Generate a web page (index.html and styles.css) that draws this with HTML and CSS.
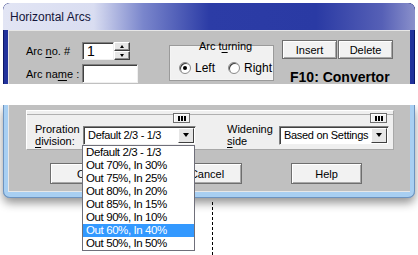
FILE: index.html
```html
<!DOCTYPE html>
<html lang="en">
<head>
  <meta charset="UTF-8" />
  <title>Horizontal Arcs</title>
  <link rel="stylesheet" href="styles.css">
</head>
<body>

  <div class="shot shot-top">
    <div class="win win-top">
      <div class="titlebar">Horizontal Arcs</div>
      <div class="client client-top">
        <div class="fields">
          <span class="lbl">Arc <u>n</u>o. #</span>
          <div class="spin">
            <div class="edit edit-no">1</div>
            <div class="spin-btns">
              <div class="spin-btn"><span class="tri tri-up"></span></div>
              <div class="spin-btn"><span class="tri tri-down"></span></div>
            </div>
          </div>
          <span class="lbl">Arc na<u>m</u>e :</span>
          <div class="edit edit-name"></div>
        </div>

        <fieldset class="group">
          <legend>Arc t<u>u</u>rning</legend>
          <span class="radio"><span class="dot on"></span>Left</span>
          <span class="radio"><span class="dot"></span>Right</span>
        </fieldset>

        <div class="actions">
          <div class="btn-pair">
            <button class="btn btn-sm">Insert</button>
            <button class="btn btn-sm">Delete</button>
          </div>
          <div class="f10">F10: Convertor</div>
        </div>
      </div>
    </div>
  </div>

  <div class="shot shot-bottom">
    <div class="win win-bottom">
      <div class="client client-bottom">
        <div class="panel">
          <button class="grip grip-left"><i></i><i></i><i></i></button>
          <button class="grip grip-right"><i></i><i></i><i></i></button>
          <span class="lbl lbl-two lbl-pro">Proration<br><u>d</u>ivision:</span>
          <div class="combo combo-pro">
            <span class="combo-text">Default 2/3 - 1/3</span>
            <span class="drop"><span class="tri tri-drop"></span></span>
          </div>
          <span class="lbl lbl-two lbl-wid">Widening<br><u>s</u>ide</span>
          <div class="combo combo-wid">
            <span class="combo-text">Based on Settings</span>
            <span class="drop"><span class="tri tri-drop"></span></span>
          </div>
        </div>

        <div class="btn-row">
          <button class="btn btn-lg btn-ok">OK</button>
          <button class="btn btn-lg btn-cancel">Cancel</button>
          <button class="btn btn-lg btn-help">Help</button>
        </div>
      </div>
    </div>
    <div class="dash"></div>

    <ul class="droplist">
      <li>Default 2/3 - 1/3</li>
      <li>Out 70%, In 30%</li>
      <li>Out 75%, In 25%</li>
      <li>Out 80%, In 20%</li>
      <li>Out 85%, In 15%</li>
      <li>Out 90%, In 10%</li>
      <li class="sel">Out 60%, In 40%</li>
      <li>Out 50%, In 50%</li>
    </ul>
  </div>

</body>
</html>
```

FILE: styles.css
```css
    * {
      box-sizing: border-box;
    }

    body {
      margin: 0;
      background: #fff;
      font-family: "Liberation Sans", Arial, sans-serif;
      font-size: 11px;
      color: #000;
    }

    u {
      text-decoration-thickness: 1px;
      text-underline-offset: 2px;
    }

    .shot {
      overflow: hidden;
      position: relative;
    }

    .shot-top {
      height: 84px;
      padding: 3px 0 0 3px;
    }

    .shot-bottom {
      height: 150px;
      margin-top: 21px;
      padding-left: 3px;
    }

    /* window frame, top screenshot (dark blue) */
    .win {
      width: 412px;
    }

    .win-top {
      height: 120px;
      background: #22329b;
      border-radius: 7px 7px 0 0;
      padding: 0 5px;
      box-shadow: inset 1px 0 #0d1866, inset -1px 0 #0d1866, inset 0 1px #0d1866;
    }

    .titlebar {
      height: 27px;
      margin: 0 -5px;
      padding: 7px 0 0 7px;
      border-radius: 7px 7px 0 0;
      background: linear-gradient(90deg, #e2e5f4 0, #d9ddf1 22%, #7a86cc 34%, #2c3ca6 50%, #2a3aa4 76%, #5660b6 92%, #8a90cb 100%);
      font-size: 12px;
      color: #14163a;
    }

    .client {
      background: #c0c0c0;
    }

    .client-top {
      display: flex;
      align-items: flex-start;
      height: 93px;
      padding: 11px 0 0 17px;
      border-top: 1px solid #e6e6e6;
      border-left: 1px solid #e6e6e6;
    }

    .fields {
      display: grid;
      grid-template-columns: 56px auto;
      grid-template-rows: 18px 19px;
      row-gap: 4px;
      align-items: center;
    }

    .lbl {
      white-space: nowrap;
    }

    .edit {
      background: #fff;
      border: 1px solid;
      border-color: #808080 #f0f0f0 #f0f0f0 #808080;
      box-shadow: inset 1px 1px #404040;
      height: 100%;
    }

    .spin {
      display: flex;
      height: 18px;
    }

    .edit-no {
      width: 32px;
      padding: 1px 0 0 4px;
      font-size: 14px;
      line-height: 15px;
    }

    .spin-btns {
      display: flex;
      flex-direction: column;
      width: 16px;
    }

    .spin-btn {
      flex: 1;
      display: flex;
      align-items: center;
      justify-content: center;
      background: #e6e6e6;
      border: 1px solid;
      border-color: #fff #404040 #404040 #fff;
      box-shadow: inset -1px -1px #909090;
    }

    .tri {
      width: 0;
      height: 0;
      border-style: solid;
      border-color: transparent;
    }

    .tri-up {
      border-width: 0 2.5px 3px;
      border-bottom-color: #000;
    }

    .tri-down {
      border-width: 3px 2.5px 0;
      border-top-color: #000;
    }

    .edit-name {
      width: 56px;
      height: 19px;
    }

    /* Arc turning */
    .group {
      margin: -3px 0 0 32px;
      width: 103px;
      height: 41px;
      padding: 4px 0 0 8px;
      border: 1px solid #f4f4f4;
      box-shadow: 0 0 0 1px #9a9a9a;
      background: #f1f1f1;
      display: flex;
      gap: 13px;
    }

    .group legend {
      margin: 0 auto;
      padding: 0 3px;
      line-height: 14px;
    }

    .radio {
      display: flex;
      align-items: center;
      gap: 4px;
      font-size: 12px;
    }

    .dot {
      width: 12px;
      height: 12px;
      border-radius: 50%;
      background: #fff;
      border: 1px solid #8a8a8a;
      box-shadow: inset 1px 1px #404040;
      display: flex;
      align-items: center;
      justify-content: center;
    }

    .dot.on::after {
      content: "";
      width: 4px;
      height: 4px;
      border-radius: 50%;
      background: #000;
    }

    .actions {
      margin: -2px 0 0 9px;
    }

    .btn-pair {
      display: flex;
      gap: 1px;
    }

    .btn {
      font: inherit;
      color: #000;
      background: #f2f2f2;
      border: 1px solid #6e6e6e;
      box-shadow: inset 1px 1px #fff, inset -1px -1px #a8a8a8;
      padding: 0;
    }

    .btn-sm {
      width: 55px;
      height: 19px;
    }

    .f10 {
      margin-top: 13px;
      padding-left: 8px;
      font-weight: bold;
      font-size: 14px;
      line-height: 11px;
      white-space: nowrap;
    }

    /* window frame, bottom screenshot (light blue) */
    .win-bottom {
      background: #a8cff2;
      border-radius: 0 0 7px 7px;
      padding: 0 5px 6px;
      box-shadow: inset 1px 0 #6d93bf, inset -1px 0 #6d93bf, inset 0 -1px #6d93bf, 0 5px 10px rgba(0, 0, 0, 0.42);
    }

    .client-bottom {
      padding: 5px 0 7px 17px;
      border-left: 1px solid #e8e8e8;
      border-bottom: 1px solid #e8e8e8;
    }

    .panel {
      position: relative;
      width: 368px;
      height: 40px;
      display: flex;
      align-items: center;
      padding: 10px 0 0 8px;
      background: #efefef;
      border: 1px solid #fff;
      border-right-color: #a8a8a8;
      border-bottom-color: #a8a8a8;
      box-shadow: inset 0 3px #efefef, inset 0 4px #b0b0b0;
    }

    .grip {
      position: absolute;
      top: 2px;
      width: 17px;
      height: 10px;
      padding: 0;
      display: flex;
      gap: 1px;
      align-items: center;
      justify-content: center;
      background: #f2f2f2;
      border: 1px solid #6e6e6e;
      box-shadow: inset 1px 1px #fff;
    }

    .grip i {
      width: 2px;
      height: 5px;
      background: #000;
    }

    .grip-left {
      left: 146px;
    }

    .grip-right {
      left: 343px;
    }

    .lbl-two {
      line-height: 12px;
    }

    .lbl-pro {
      width: 48px;
    }

    .lbl-wid {
      width: 52px;
      margin-left: 31px;
    }

    .combo {
      display: flex;
      align-items: center;
      height: 19px;
      background: #fff;
      border: 1px solid;
      border-color: #808080 #f0f0f0 #f0f0f0 #808080;
      box-shadow: inset 1px 1px #404040;
      padding: 1px 1px 1px 4px;
      letter-spacing: -0.3px;
    }

    .combo-pro {
      width: 113px;
    }

    .combo-wid {
      width: 110px;
    }

    .combo-text {
      flex: 1;
      white-space: nowrap;
      overflow: hidden;
    }

    .drop {
      width: 16px;
      height: 15px;
      flex-shrink: 0;
      display: flex;
      align-items: center;
      justify-content: center;
      background: #e6e6e6;
      border: 1px solid;
      border-color: #fff #404040 #404040 #fff;
    }

    .tri-drop {
      border-width: 4px 3.5px 0;
      border-top-color: #000;
    }

    .btn-row {
      display: flex;
      margin: 13px 0 0 24px;
    }

    .btn-lg {
      width: 70px;
      height: 21px;
    }

    .btn-cancel {
      margin-left: 52px;
    }

    .btn-help {
      margin-left: 49px;
      width: 71px;
    }

    .dash {
      margin: 4px 0 0 209px;
      width: 1px;
      height: 60px;
      background: repeating-linear-gradient(to bottom, #000 0 3px, transparent 3px 5px);
    }

    /* the open drop-down of Proration division */
    .droplist {
      position: absolute;
      left: 82px;
      top: 40px;
      width: 113px;
      margin: 0;
      padding: 0;
      list-style: none;
      background: #fff;
      border: 1px solid #6f6f7a;
      font-size: 11.5px;
      letter-spacing: -0.4px;
    }

    .droplist li {
      height: 13px;
      line-height: 13px;
      padding-left: 3px;
      white-space: nowrap;
    }

    .droplist li.sel {
      background: #3399ff;
      color: #fff;
    }
```
